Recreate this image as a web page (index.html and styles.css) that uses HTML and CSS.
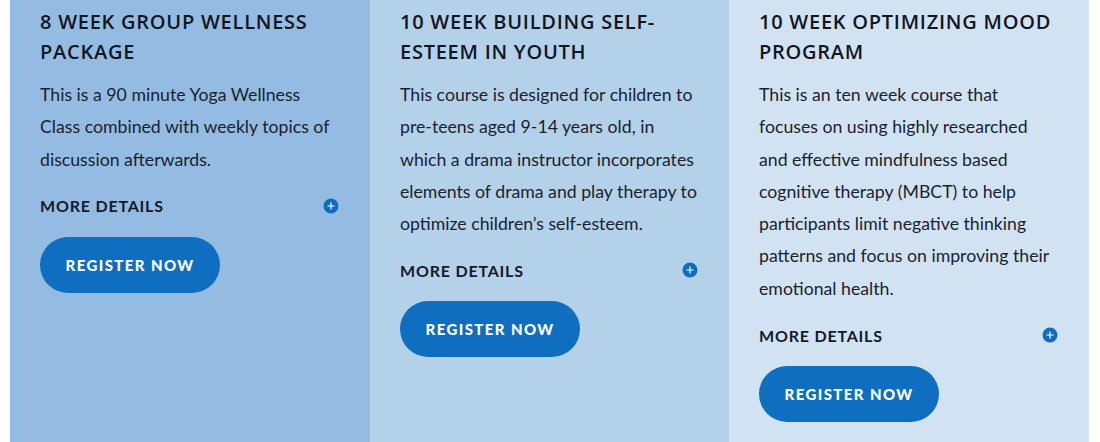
FILE: index.html
```html
<!DOCTYPE html>
<html>
<head>
<meta charset="utf-8">
<link rel="stylesheet" href="styles.css">
</head>
<body>
<div class="programs">
  <div class="card c1">
    <h2 class="title">8 WEEK GROUP WELLNESS PACKAGE</h2>
    <p class="desc">This is a 90 minute Yoga Wellness Class combined with weekly topics of discussion afterwards.</p>
    <div class="more"><span>MORE DETAILS</span><svg class="plus" viewBox="0 0 16 16" width="16" height="16"><circle cx="8" cy="8" r="7.5" fill="#0f6dbd"/><path d="M4.5 8h7M8 4.5v7" stroke="#fff" stroke-width="1.2"/></svg></div>
    <a class="btn">REGISTER NOW</a>
  </div>
  <div class="card c2">
    <h2 class="title">10 WEEK BUILDING SELF-ESTEEM IN YOUTH</h2>
    <p class="desc">This course is designed for children to pre-teens aged 9-14 years old, in which a drama instructor incorporates elements of drama and play therapy to optimize children’s self-esteem.</p>
    <div class="more"><span>MORE DETAILS</span><svg class="plus" viewBox="0 0 16 16" width="16" height="16"><circle cx="8" cy="8" r="7.5" fill="#0f6dbd"/><path d="M4.5 8h7M8 4.5v7" stroke="#fff" stroke-width="1.2"/></svg></div>
    <a class="btn">REGISTER NOW</a>
  </div>
  <div class="card c3">
    <h2 class="title">10 WEEK OPTIMIZING MOOD PROGRAM</h2>
    <p class="desc">This is an ten week course that focuses on using highly researched and effective mindfulness based cognitive therapy (MBCT) to help participants limit negative thinking patterns and focus on improving their emotional health.</p>
    <div class="more"><span>MORE DETAILS</span><svg class="plus" viewBox="0 0 16 16" width="16" height="16"><circle cx="8" cy="8" r="7.5" fill="#0f6dbd"/><path d="M4.5 8h7M8 4.5v7" stroke="#fff" stroke-width="1.2"/></svg></div>
    <a class="btn">REGISTER NOW</a>
  </div>
</div>
</body>
</html>
```
FILE: styles.css
```css
html, body {
  margin: 0;
  padding: 0;
  background: #ffffff;
}
.programs {
  display: flex;
  padding: 0 11px 0 10px;
  height: 442px;
}
.card {
  width: 360px;
  box-sizing: border-box;
  padding: 7px 30px 0 30px;
  color: #15192a;
}
.c1 { background: #94bce2; width: 360px; }
.c2 { background: #b4d1ea; width: 359px; }
.c3 { background: #d1e3f3; width: 360px; }
.title {
  margin: 0;
  font-family: "Open Sans", "DejaVu Sans", sans-serif;
  font-weight: 600;
  font-size: 20px;
  line-height: 30px;
  letter-spacing: 0.75px;
  color: #111522;
}
.desc {
  margin: 12px 0 0 0;
  font-family: Lato, "Liberation Sans", sans-serif;
  font-size: 17.7px;
  line-height: 32.3px;
  color: #1a1f2e;
}
.more {
  margin-top: 15px;
  height: 30px;
  display: flex;
  align-items: center;
  justify-content: space-between;
  padding-right: 1px;
  font-family: Lato, "Liberation Sans", sans-serif;
  font-weight: 700;
  font-size: 16px;
  letter-spacing: 0.8px;
  color: #15192a;
}
.plus { display: block; }
.btn {
  margin-top: 16px;
  display: flex;
  align-items: center;
  justify-content: center;
  width: 180px;
  height: 56px;
  border-radius: 28px;
  background: #0f6ebf;
  color: #ffffff;
  font-family: Lato, "Liberation Sans", sans-serif;
  font-weight: 900;
  font-size: 15px;
  letter-spacing: 1.4px;
}
```
